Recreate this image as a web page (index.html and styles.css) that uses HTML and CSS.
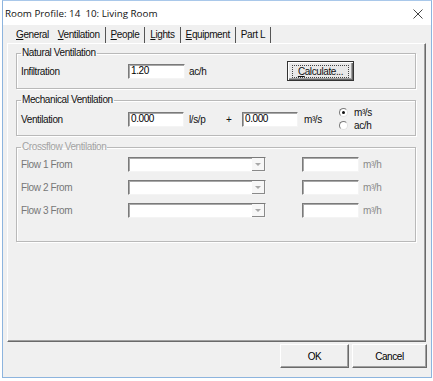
FILE: index.html
```
<!DOCTYPE html>
<html lang="en">
<head>
    <meta charset="UTF-8">
    <title>Room Profile</title>
    <link rel="stylesheet" href="styles.css">
</head>
<body>

<div class="window">
    <div class="titlebar">
        <span class="title">Room Profile: 14&nbsp; 10: Living Room</span>
        <svg class="close" width="10" height="10" viewBox="0 0 10 10"><path d="M0.5 0.5L9.5 9.5M9.5 0.5L0.5 9.5" stroke="#444" stroke-width="1" fill="none"/></svg>
    </div>

    <div class="client">
        <div class="tabs">
            <span class="tab first"><u>G</u>eneral</span>
            <span class="tab"><u>V</u>entilation</span>
            <span class="tab"><u>P</u>eople</span>
            <span class="tab"><u>L</u>ights</span>
            <span class="tab"><u>E</u>quipment</span>
            <span class="tab">Part L</span>
        </div>

        <div class="panel">
            <fieldset class="group natural">
                <legend>Natural Ventilation</legend>
                <div class="row">
                    <span class="label">Infiltration</span>
                    <span class="field w57">1.20</span>
                    <span class="unit u-ach">ac/h</span>
                    <span class="button calc"><span class="focus"><u>C</u>alculate...</span></span>
                </div>
            </fieldset>

            <fieldset class="group mech">
                <legend>Mechanical Ventilation</legend>
                <div class="row">
                    <span class="label">Ventilation</span>
                    <span class="field w56">0.000</span>
                    <span class="unit u-lsp">l/s/p</span>
                    <span class="plus">+</span>
                    <span class="field w56">0.000</span>
                    <span class="unit u-m3s">m³/s</span>
                    <div class="radios">
                        <div class="radio"><span class="dot on"></span>m³/s</div>
                        <div class="radio"><span class="dot"></span>ac/h</div>
                    </div>
                </div>
            </fieldset>

            <fieldset class="group cross disabled">
                <legend>Crossflow Ventilation</legend>
                <div class="row flow">
                    <span class="label">Flow 1 From</span>
                    <span class="combo"><span class="drop"><span class="arrow"></span></span></span>
                    <span class="field w57 gapped"></span>
                    <span class="unit">m³/h</span>
                </div>
                <div class="row flow">
                    <span class="label">Flow 2 From</span>
                    <span class="combo"><span class="drop"><span class="arrow"></span></span></span>
                    <span class="field w57 gapped"></span>
                    <span class="unit">m³/h</span>
                </div>
                <div class="row flow">
                    <span class="label">Flow 3 From</span>
                    <span class="combo"><span class="drop"><span class="arrow"></span></span></span>
                    <span class="field w57 gapped"></span>
                    <span class="unit">m³/h</span>
                </div>
            </fieldset>
        </div>

        <div class="actions">
            <span class="button ok">OK</span>
            <span class="button cancel">Cancel</span>
        </div>
    </div>
</div>

</body>
</html>
```

FILE: styles.css
```
body { margin: 0; background: #fff; font-family: "Liberation Sans", Arial, sans-serif; font-size: 10px; letter-spacing: -0.4px; color: #111; }

.window { width: 428px; margin-left: 2px; border: 1px solid #8db4de; border-top-color: #a9c8ea; }
.titlebar { height: 24px; background: #fff; display: flex; align-items: center; justify-content: space-between; padding: 1px 8px 0 2px; box-sizing: border-box; }
.title { font-family: "Open Sans", "Noto Sans", sans-serif; font-size: 9.8px; letter-spacing: 0; color: #111; }
.close { margin-top: 1px; }

.client { background: #f0f0f0; height: 352px; box-sizing: border-box; padding: 2px 4px 0 4px; }

.tabs { display: flex; height: 16px; align-items: center; padding-left: 4px; }
.tab { padding: 0 5px; height: 16px; line-height: 16px; border-right: 1px solid #555; }
.tab.first { border-right: none; padding-left: 5px; padding-right: 5px; }
.tab.first + .tab { padding-left: 4px; }
.tab u { text-decoration-thickness: 1px; }

.panel { height: 299px; box-sizing: border-box; margin-right: 1px; padding: 3px 9px 0 8px; border-top: 1px solid #fff; border-left: 1px solid #fff; border-right: 1px solid #6a6a6a; border-bottom: 1px solid #6a6a6a; box-shadow: inset -1px -1px 0 #a0a0a0; }

.group { margin: 0; min-width: 0; border: 1px solid #b9b9b9; box-shadow: inset 1px 1px 0 #fff, 1px 1px 0 #fff; padding: 2px 4px 7px 4px; }
.group legend { padding: 0 1px; line-height: 12px; }
.mech { margin-top: 5px; padding-top: 0; padding-bottom: 3px; }
.cross { margin-top: 5px; padding-top: 4px; padding-bottom: 23px; }

.row { display: flex; align-items: center; height: 20px; }
.mech .row { height: 26px; }
.flow { height: 15px; }
.flow + .flow { margin-top: 8px; }

.label { width: 107px; }
.field { height: 15px; box-sizing: border-box; background: #fff; border: 1px solid; border-color: #7a7a7a #f4f4f4 #f4f4f4 #7a7a7a; box-shadow: inset 1px 1px 0 #a8a8a8; padding-left: 2px; line-height: 12px; color: #000; }
.w57 { width: 57px; }
.w56 { width: 56px; }
.unit { margin-left: 4px; }
.u-ach { width: 98px; }
.u-lsp { margin-left: 5px; width: 37px; }
.plus { width: 16px; }
.u-m3s { margin-left: 6px; width: 35px; }

.button { display: flex; align-items: center; justify-content: center; box-sizing: border-box; background: #e9e9e9; border: 1px solid; border-color: #fff #6a6a6a #6a6a6a #fff; box-shadow: inset -1px -1px 0 #a0a0a0; }
.calc { width: 67px; height: 20px; border: 1px solid #333; box-shadow: inset 1px 1px 0 #fff, inset -1px -1px 0 #6a6a6a, inset -2px -2px 0 #a0a0a0; }
.focus { outline: 1px dotted #444; padding: 0 5px; line-height: 11px; }

.radios { display: flex; flex-direction: column; }
.radio { display: flex; align-items: center; gap: 6px; height: 13px; }
.dot { width: 9px; height: 9px; box-sizing: border-box; border-radius: 50%; background: #fff; border: 1px solid; border-color: #7a7a7a #e2e2e2 #e2e2e2 #7a7a7a; display: grid; place-items: center; }
.dot.on::after { content: ""; width: 3px; height: 3px; border-radius: 50%; background: #111; }

.disabled, .disabled legend { color: #777; }
.disabled legend { color: #a3a3a3; }
.disabled .unit { color: #8a8a8a; margin-left: 4px; }
.combo { width: 138px; height: 15px; box-sizing: border-box; background: #fff; border: 1px solid; border-color: #7a7a7a #f4f4f4 #f4f4f4 #7a7a7a; box-shadow: inset 1px 1px 0 #a8a8a8; display: flex; justify-content: flex-end; }
.drop { width: 13px; height: 13px; box-sizing: border-box; background: #f7f7f7; border-right: 1px solid #8a8a8a; border-bottom: 1px solid #8a8a8a; display: grid; place-items: center; }
.arrow { width: 0; height: 0; border-left: 3px solid transparent; border-right: 3px solid transparent; border-top: 3px solid #a8a8a8; }
.gapped { margin-left: 36px; }

.actions { display: flex; justify-content: flex-end; gap: 3px; margin-top: 2px; padding-right: 0; }
.ok, .cancel { height: 24px; background: #f0f0f0; color: #000; }
.ok { width: 69px; }
.cancel { width: 75px; }
```
